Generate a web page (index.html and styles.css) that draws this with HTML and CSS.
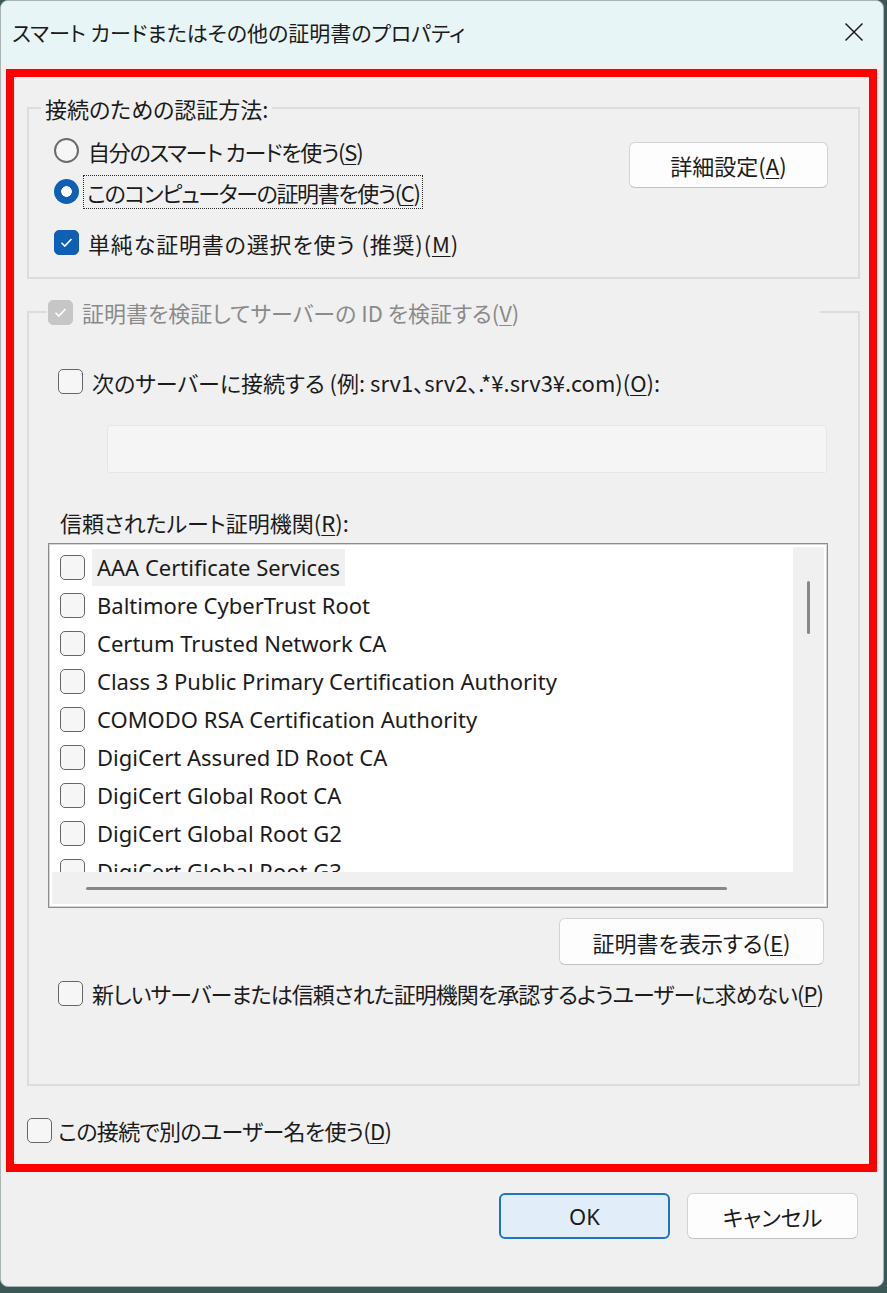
FILE: index.html
```html
<!DOCTYPE html>
<html lang="ja">
<head>
    <meta charset="UTF-8">
    <meta name="viewport" content="width=device-width, initial-scale=1.0">
    <title>スマート カードまたはその他の証明書のプロパティ</title>
    <link rel="stylesheet" href="styles.css">
</head>
<body>
    <div class="dialog">
        <div class="titlebar">
            <span class="title">スマート カードまたはその他の証明書のプロパティ</span>
            <svg class="close-icon" width="20" height="20" viewBox="0 0 20 20">
                <path d="M1.5 1.5 L18.5 18.5 M18.5 1.5 L1.5 18.5" stroke="#1b1b1b" stroke-width="1.5" fill="none"/>
            </svg>
        </div>

        <div class="dialog-body">
            <div class="highlight">
                <!-- 認証方法 -->
                <fieldset class="group group-auth">
                    <legend>接続のための認証方法:</legend>
                    <div class="auth-row">
                        <div class="auth-options">
                            <div class="option">
                                <span class="radio"></span>
                                <span class="ls-13">自分のスマート カードを使う(<u>S</u>)</span>
                            </div>
                            <div class="option">
                                <span class="radio checked"></span>
                                <span class="focus-label ls-14">このコンピューターの証明書を使う(<u>C</u>)</span>
                            </div>
                            <div class="option option-spaced">
                                <span class="checkbox checked">
                                    <svg width="15" height="15" viewBox="0 0 15 15"><path d="M2.5 7.8 L5.8 11 L12.5 4" stroke="#fff" stroke-width="1.6" fill="none"/></svg>
                                </span>
                                <span class="ls-wide">単純な証明書の選択を使う (推奨)(<u>M</u>)</span>
                            </div>
                        </div>
                        <button class="btn btn-advanced">詳細設定(<u>A</u>)</button>
                    </div>
                </fieldset>

                <!-- サーバー検証 -->
                <fieldset class="group group-verify">
                    <legend class="option disabled">
                        <span class="checkbox disabled">
                            <svg width="15" height="15" viewBox="0 0 15 15"><path d="M2.5 7.8 L5.8 11 L12.5 4" stroke="#fff" stroke-width="1.6" fill="none"/></svg>
                        </span>
                        <span>証明書を検証してサーバーの ID を検証する(<u>V</u>)</span>
                    </legend>

                    <div class="option indent">
                        <span class="checkbox"></span>
                        <span>次のサーバーに接続する (例: srv1、srv2、.*¥.srv3¥.com)(<u>O</u>):</span>
                    </div>
                    <div class="server-input"></div>

                    <div class="list-label">信頼されたルート証明機関(<u>R</u>):</div>
                    <div class="cert-list">
                        <div class="cert-items">
                            <div class="cert-item"><span class="checkbox"></span><span class="cert-name hover">AAA Certificate Services</span></div>
                            <div class="cert-item"><span class="checkbox"></span><span class="cert-name">Baltimore CyberTrust Root</span></div>
                            <div class="cert-item"><span class="checkbox"></span><span class="cert-name">Certum Trusted Network CA</span></div>
                            <div class="cert-item"><span class="checkbox"></span><span class="cert-name">Class 3 Public Primary Certification Authority</span></div>
                            <div class="cert-item"><span class="checkbox"></span><span class="cert-name">COMODO RSA Certification Authority</span></div>
                            <div class="cert-item"><span class="checkbox"></span><span class="cert-name">DigiCert Assured ID Root CA</span></div>
                            <div class="cert-item"><span class="checkbox"></span><span class="cert-name">DigiCert Global Root CA</span></div>
                            <div class="cert-item"><span class="checkbox"></span><span class="cert-name">DigiCert Global Root G2</span></div>
                            <div class="cert-item"><span class="checkbox"></span><span class="cert-name">DigiCert Global Root G3</span></div>
                        </div>
                        <div class="vscroll"><span class="vthumb"></span></div>
                        <div class="hscroll"><span class="hthumb"></span></div>
                        <div class="scroll-corner"></div>
                    </div>

                    <div class="show-row">
                        <button class="btn btn-show">証明書を表示する(<u>E</u>)</button>
                    </div>

                    <div class="option indent option-last">
                        <span class="checkbox"></span>
                        <span class="ls-10">新しいサーバーまたは信頼された証明機関を承認するようユーザーに求めない(<u>P</u>)</span>
                    </div>
                </fieldset>

                <div class="option option-user">
                    <span class="checkbox"></span>
                    <span class="ls-07">この接続で別のユーザー名を使う(<u>D</u>)</span>
                </div>
            </div>

            <div class="footer">
                <button class="btn btn-ok">OK</button>
                <button class="btn btn-cancel">キャンセル</button>
            </div>
        </div>
    </div>
</body>
</html>
```

FILE: styles.css
```css
html, body {
    margin: 0;
    padding: 0;
}

body {
    background: #3b5856;
    width: 887px;
    height: 1293px;
    overflow: hidden;
    font-family: "Noto Sans CJK JP", sans-serif;
    font-feature-settings: "palt";
    font-size: 22px;
    color: #1b1b1b;
}

u {
    text-decoration: underline;
    text-decoration-thickness: 1px;
    text-underline-offset: 3px;
}

/* 文字幅の微調整 (Yu Gothic UI に近づける) */
.ls-14 { letter-spacing: -1.4px; }
.ls-13 { letter-spacing: -1.25px; }
.ls-10 { letter-spacing: -0.95px; }
.ls-07 { letter-spacing: -0.7px; }
.ls-wide { letter-spacing: 0.85px; }

.dialog {
    width: 884px;
    height: 1287px;
    box-sizing: border-box;
    border: 1px solid #a9b3b3;
    border-radius: 8px;
    background: #f0f0f0;
    overflow: hidden;
    display: flex;
    flex-direction: column;
}

/* タイトルバー */
.titlebar {
    height: 62px;
    flex: none;
    background: #e8f5f7;
    display: flex;
    align-items: center;
    justify-content: space-between;
    padding: 0 19px 0 11px;
}

.title {
    font-size: 21px;
    line-height: 30px;
}

.dialog-body {
    flex: 1;
    display: flex;
    flex-direction: column;
}

/* 赤枠 */
.highlight {
    margin: 6px 6px 0 5px;
    border: 8px solid #ff0000;
    padding: 17px 9px 14px 13px;
}

.group {
    margin: 0;
    border: 2px solid #dcdcdc;
    min-width: 0;
}

.group legend {
    line-height: 28px;
    height: 28px;
    padding: 0 4px;
}

/* 認証方法 */
.group-auth {
    padding: 8px 30px 14px 12px;
}

.auth-row {
    display: flex;
    justify-content: space-between;
    align-items: flex-start;
}

.auth-options {
    margin-left: 13px;
}

.option {
    display: flex;
    align-items: center;
    gap: 9px;
    height: 41px;
    white-space: nowrap;
}

.option-spaced {
    margin-top: 10px;
}

.focus-label {
    outline: 1px dotted #2a2a2a;
    padding: 0 3px;
    margin-left: -4px;
    line-height: 32px;
}

.radio {
    flex: none;
    width: 25px;
    height: 25px;
    box-sizing: border-box;
    border-radius: 50%;
    border: 2px solid #6b6b6b;
    background: #f6f6f6;
}

.radio.checked {
    border: none;
    background: radial-gradient(circle, #ffffff 0 5px, #0f5fb5 5.6px);
}

.checkbox {
    flex: none;
    width: 25px;
    height: 25px;
    box-sizing: border-box;
    border: 1.6px solid #666666;
    border-radius: 5px;
    background: #f6f6f6;
    display: flex;
    align-items: center;
    justify-content: center;
}

.checkbox.checked {
    background: #0f5fb5;
    border-color: #0f5fb5;
}

.checkbox.disabled {
    background: #c6c6c6;
    border-color: #c6c6c6;
}

/* ボタン */
.btn {
    font-family: inherit;
    font-feature-settings: "palt";
    font-size: 22px;
    color: #1b1b1b;
    background: #fdfdfd;
    border: 1px solid #d3d3d3;
    border-bottom-color: #c2c2c2;
    border-radius: 6px;
    padding: 0;
    box-sizing: border-box;
}

.btn-advanced {
    width: 199px;
    height: 46px;
    margin-top: 12px;
}

/* サーバー検証 */
.group-verify {
    margin-top: 19px;
    padding: 35px 30px 71px 18px;
}

.group-verify legend {
    width: 773px;
    box-sizing: border-box;
    padding: 0 0 0 1px;
    color: #8a8a8a;
}

.indent {
    margin-left: 11px;
}

.server-input {
    margin: 23px 1px 0 60px;
    height: 48px;
    box-sizing: border-box;
    background: #f5f5f5;
    border: 1px solid #e6e6e6;
    border-radius: 3px;
}

.list-label {
    margin: 34px 0 0 13px;
    height: 30px;
    line-height: 30px;
}

.cert-list {
    margin: 6px 0 0 1px;
    height: 365px;
    box-sizing: border-box;
    border: 1px solid #8c8c8c;
    box-shadow: inset 0 0 0 1px #d6d6d6;
    background: #ffffff;
    padding: 3px;
    display: grid;
    grid-template-columns: 1fr 31px;
    grid-template-rows: 1fr 32px;
}

.cert-items {
    overflow: hidden;
    padding-top: 1px;
    font-family: "Noto Sans", sans-serif;
    font-feature-settings: normal;
    font-size: 22px;
}

.cert-item {
    display: flex;
    align-items: center;
    gap: 7px;
    height: 38px;
    padding-left: 8px;
    white-space: nowrap;
}

.cert-name {
    padding: 0 5px;
    line-height: 37px;
}

.cert-name.hover {
    background: #f0f0f0;
}

.vscroll {
    background: #f0f0f0;
    display: flex;
    justify-content: center;
    padding-top: 34px;
}

.vthumb {
    width: 3px;
    height: 53px;
    border-radius: 2px;
    background: #878787;
}

.hscroll {
    background: #f0f0f0;
    display: flex;
    align-items: center;
    padding-left: 34px;
}

.hthumb {
    width: 641px;
    height: 3px;
    border-radius: 2px;
    background: #878787;
}

.scroll-corner {
    background: #f0f0f0;
}

.show-row {
    display: flex;
    justify-content: flex-end;
    margin-top: 10px;
}

.btn-show {
    width: 265px;
    height: 47px;
    margin-right: 4px;
}

.option-last {
    margin-top: 8px;
    height: 40px;
}

.option-user {
    margin-top: 24px;
    height: 40px;
    gap: 6px;
}

/* フッター */
.footer {
    display: flex;
    justify-content: flex-end;
    gap: 17px;
    padding: 21px 25px 0 0;
}

.btn-ok,
.btn-cancel {
    width: 171px;
    height: 46px;
}

.btn-ok {
    background: #e1eef9;
    border: 2px solid #1f72c9;
    font-family: "Noto Sans", sans-serif;
}
```
